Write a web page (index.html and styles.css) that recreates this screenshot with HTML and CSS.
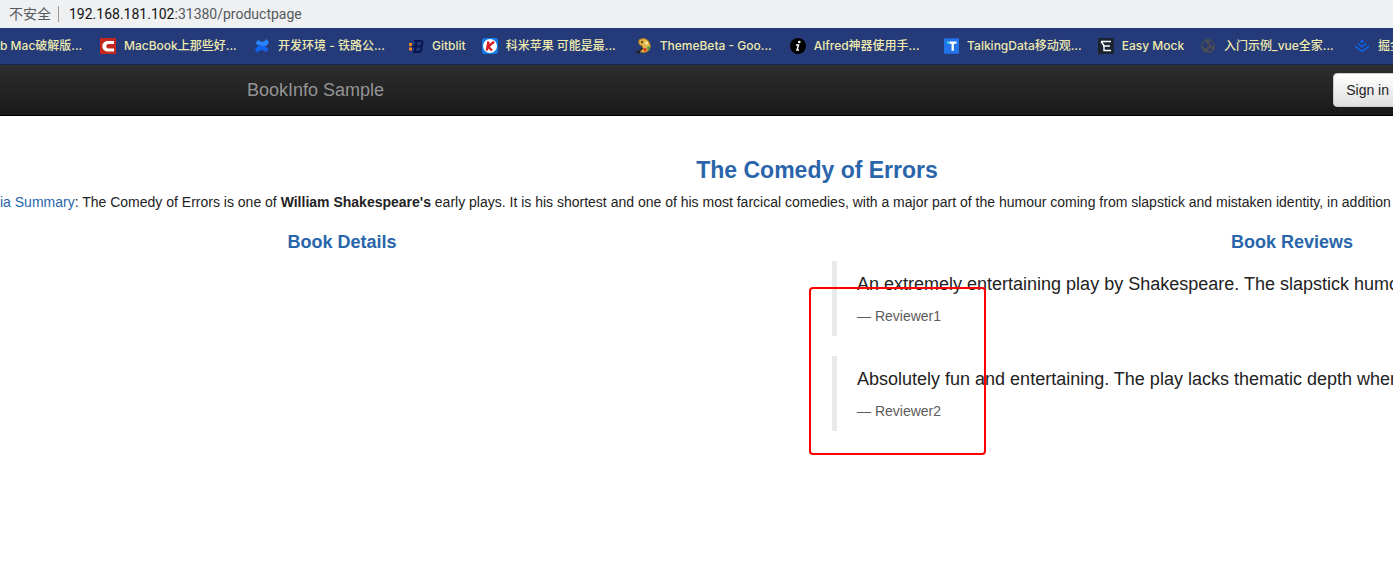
FILE: index.html
```html
<!DOCTYPE html>
<html lang="en">
<head>
<meta charset="utf-8">
<title>Simple Bookstore App</title>
<link rel="stylesheet" href="styles.css">
</head>
<body>
<header class="browser">
  <div class="address">
    <span class="security" lang="zh">不安全</span>
    <span class="url"><span class="host">192.168.181.102</span>:31380/productpage</span>
  </div>
  <nav class="bookmarks" lang="zh">
    <a class="bookmark bookmark-first" href="#"><span>b Mac破解版...</span></a>
    <a class="bookmark bookmark-long" href="#">
      <svg viewBox="0 0 16 16"><path fill="#c4281f" d="M0 0h16v16H0z"/><path fill="#fff" d="M14 3v3H8.500C5.500 6 5.500 10.500 8.500 10.500h5.500V13.500H8C.500 13.500.500 3 8 3z"/></svg>
      <span>MacBook上那些好...</span></a>
    <a class="bookmark bookmark-long" href="#">
      <svg viewBox="0 0 16 16"><path fill="#2684ff" d="M15 4.500 12.500 1Q10 4.700 7.500 3.800L3.600 2 1.600 5.800l4.800 2.300C10 9.600 12.500 8.500 15 4.500z"/><path fill="#1264ed" d="M1 11.500 3.500 15Q6 11.300 8.500 12.200l3.900 1.800 2-3.800-4.800-2.300C6 6.400 3.500 7.500 1 11.500z"/></svg>
      <span>开发环境 - 铁路公...</span></a>
    <a class="bookmark" href="#">
      <svg viewBox="0 0 16 16"><path fill="#f58220" d="M1 5h3v3H1zM1 9.500h3v3H1z"/><path fill="none" stroke="#071650" stroke-width="2" d="M6 3h7.500l1 1-.5 3-2 1.500 1.500 1-.5 3-1.500 1.500H5M8.500 3 7 14M4 8.500h8"/></svg>
      <span>Gitblit</span></a>
    <a class="bookmark bookmark-long" href="#">
      <svg viewBox="0 0 16 16"><rect width="16" height="16" rx="3" fill="#127be8"/><circle cx="8" cy="8" r="7" fill="#fff"/><path d="M6.500 3.500 4.800 12.500M12 3.800 6.200 8.500 10 12.500" fill="none" stroke="#d81e24" stroke-width="2.400"/></svg>
      <span>科米苹果 可能是最...</span></a>
    <a class="bookmark bookmark-long" href="#">
      <svg viewBox="0 0 16 16"><path d="M3 2Q8-1 12 2.500q4 5 1 9.500-4 4-9 1.500 4-3 2-6-4 0-3-5.500z" fill="#e6b84b" stroke="#ad741c"/><path d="m2 14 5-4" stroke="#27251f" stroke-width="1.500"/><path d="M0 13h4v2H0z" fill="#222"/><circle cx="6" cy="4" r="1.200" fill="#6b451c"/><circle cx="10.500" cy="5" r="1.500" fill="#f7e9b0"/><circle cx="9" cy="11.500" r="1.800" fill="#df4027"/><circle cx="12.500" cy="10" r="1.500" fill="#309c45"/></svg>
      <span>ThemeBeta - Goo...</span></a>
    <a class="bookmark bookmark-long" href="#">
      <svg viewBox="0 0 16 16"><circle cx="8" cy="8" r="8" fill="#000"/><circle cx="9.300" cy="4" r="1.300" fill="#fff"/><path d="M6 7h2.500L7 12h2" fill="none" stroke="#fff" stroke-width="1.500"/></svg>
      <span>Alfred神器使用手...</span></a>
    <a class="bookmark bookmark-long" href="#">
      <svg viewBox="0 0 16 16"><rect width="16" height="16" rx="1" fill="#2473eb"/><path d="M5.500 4.500H13M9 4v9" stroke="#fff" stroke-width="2.400"/><path fill="#37d9d0" d="M3 3.300h2.500v2.400H3z"/></svg>
      <span>TalkingData移动观...</span></a>
    <a class="bookmark" href="#">
      <svg viewBox="0 0 16 16"><path fill="#1b2431" d="M0 0h16v16H0z"/><path d="M3 3.500h10M3 3.500l3 4M5 8h7M6 8v4.500h7" fill="none" stroke="#fff" stroke-width="1.400"/></svg>
      <span>Easy Mock</span></a>
    <a class="bookmark bookmark-long" href="#">
      <svg viewBox="0 0 16 16"><circle cx="8" cy="8" r="7" fill="#4a4d55"/><path fill="#263974" d="m2.500 6 2-3 2 .5-.5 2L8 6l1 2-2 1-1.500 2L3 8.500zM10 2.500l3 2 1 3-2 1-2-2 1-1-2-1zM9 10l3 .5-1 2-2.500 1z"/></svg>
      <span>入门示例_vue全家...</span></a>
    <a class="bookmark bookmark-long" href="#">
      <svg viewBox="0 0 16 16"><path fill="#0a6cff" d="m8 2 2 1.500L8 5 6 3.500z"/><path d="m4 5.700 4 3 4-3M1 8.200l7 5.300 7-5.300" fill="none" stroke="#0a6cff" stroke-width="1.300"/></svg>
      <span>掘金</span></a>
  </nav>
</header>
<nav class="navbar">
  <a class="brand" href="#">BookInfo Sample</a>
  <button class="sign-in" type="button">Sign in</button>
</nav>
<main class="page">
  <div class="summary">
    <h3 class="title">The Comedy of Errors</h3>
  </div>
  <p class="description"><a href="#">ia Summary</a>: The Comedy of Errors is one of <b>William Shakespeare's</b> early plays. It is his shortest and one of his most farcical comedies, with a major part of the humour coming from slapstick and mistaken identity, in addition</p>
  <div class="columns">
    <section>
      <h4 class="heading">Book Details</h4>
    </section>
    <section class="reviews">
      <h4 class="heading">Book Reviews</h4>
      <div class="review-list">
        <blockquote class="review">
          <p>An extremely entertaining play by Shakespeare. The slapstick humour</p>
          <small>— Reviewer1</small>
        </blockquote>
        <blockquote class="review">
          <p>Absolutely fun and entertaining. The play lacks thematic depth when</p>
          <small>— Reviewer2</small>
        </blockquote>
        <div class="highlight"></div>
      </div>
    </section>
  </div>
</main>
</body>
</html>
```
FILE: styles.css
```css
* { box-sizing: border-box; }
body {
  margin: 0;
  overflow: hidden;
  background: #fff;
  color: #222;
  font: 14px/20px "Liberation Sans", Arial, sans-serif;
}
a { color: #2965aa; text-decoration: none; }

.browser { font-family: Inter, "Noto Sans CJK SC", sans-serif; white-space: nowrap; }
.address {
  display: flex;
  align-items: center;
  height: 28px;
  padding-left: 9px;
  background: #eff0f2;
  color: #55585c;
  font-family: Roboto, "Noto Sans CJK SC", sans-serif;
  font-size: 14px;
}
.security { height: 16px; line-height: 16px; padding-right: 7px; margin-right: 10px; border-right: 1px solid #999; }
.host { color: #111; }
.bookmarks {
  display: flex;
  gap: 16px;
  height: 37px;
  align-items: center;
  overflow: hidden;
  background: #253a78;
  border-bottom: 1px solid #17244d;
}
.bookmark { display: flex; flex: none; align-items: center; gap: 8px; color: #eeeaae; font-size: 12px; font-weight: 500; }
.bookmark svg { width: 16px; height: 16px; }
.bookmark-first { width: 84px; }
.bookmark-long { width: 138px; }

.navbar {
  display: flex;
  align-items: center;
  justify-content: space-between;
  height: 51px;
  padding-left: 247px;
  background: linear-gradient(#2e2e2e, #191919);
  border-bottom: 1px solid #000;
}
.brand { color: #949494; font-size: 18px; }
.sign-in {
  height: 34px;
  margin-right: -9px;
  padding: 0 12px;
  border: 1px solid #ccc;
  border-radius: 4px;
  background: linear-gradient(#fff, #e0e0e0);
  color: #222;
  font: inherit;
}

.page { overflow: hidden; padding-top: 40px; }
.summary, .columns { margin: 0 -374px 0 -133px; }
.title, .heading {
  margin: 0;
  color: #2965aa;
  font-weight: 700;
  text-align: center;
}
.title { font-size: 23px; line-height: 28px; }
.heading { font-size: 18px; line-height: 20px; }
.description { margin: 8px 0 20px; white-space: nowrap; }
.columns { display: grid; grid-template-columns: minmax(0, 1fr) minmax(0, 1fr); }
.review-list { position: relative; padding: 9px 15px; }
.review {
  margin: 0 0 20px;
  padding: 11px 20px 10px;
  border-left: 5px solid #e9e9e9;
  white-space: nowrap;
}
.review p { margin: 0 0 9px; font-size: 18px; line-height: 25px; }
.review small { display: block; color: #5c5c5c; font-size: 14px; }
.highlight {
  position: absolute;
  top: 35px;
  left: -8px;
  width: 177px;
  height: 168px;
  border: 2px solid #f00;
  border-radius: 4px;
}
```
